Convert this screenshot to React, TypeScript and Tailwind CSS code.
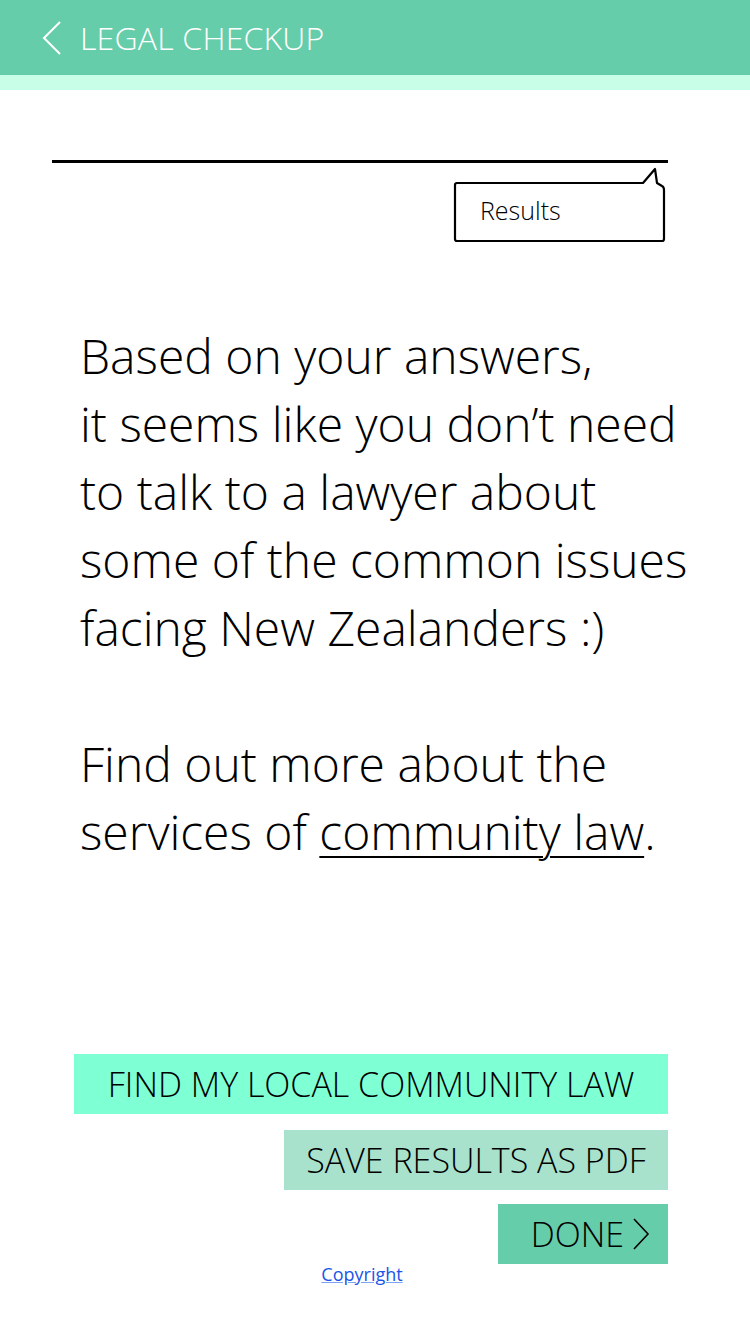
const font = { fontFamily: '"Open Sans", "Liberation Sans", sans-serif' };

function Callout() {
  return (
    <div className="relative w-[213px] h-[60px]">
      {/* outline with the little tail at top-right */}
      <svg
        className="absolute left-0 top-[-17px] overflow-visible"
        width="213"
        height="77"
        viewBox="0 0 213 77"
        fill="none"
      >
        <path
          d="M4 17 H190 L202 3 L204 17 L209 20 Q211 21 211 24 V73 Q211 75 209 75 H4 Q2 75 2 73 V19 Q2 17 4 17 Z"
          fill="white"
          stroke="black"
          strokeWidth="2.2"
          strokeLinejoin="round"
        />
      </svg>
      <span className="absolute left-[27px] top-[12px] text-[25px] leading-[30px] font-light text-black" style={font}>
        Results
      </span>
    </div>
  );
}

export default function App() {
  return (
    <div className="w-[750px] min-h-[1334px] bg-white" style={font}>
      {/* Header */}
      <div className="h-[75px] bg-[#66CDAA] flex items-center pl-[42px]">
        <svg width="20" height="34" viewBox="0 0 20 34" fill="none">
          <path d="M18 1 L2 17 L18 33" stroke="white" strokeWidth="2" />
        </svg>
        <h1 className="ml-[18px] text-white text-[32px] font-light tracking-[0.2px]">LEGAL CHECKUP</h1>
      </div>
      <div className="h-[15px] bg-[#C8FDE8]"></div>

      {/* Progress line + label */}
      <div className="pt-[70px] pl-[52px] pr-[82px]">
        <div className="h-[3px] bg-black"></div>
        <div className="flex justify-end mt-[20px] mr-[2px]">
          <Callout />
        </div>
      </div>

      {/* Result message */}
      <p className="mt-[79px] pl-[80px] text-[48px] leading-[68px] font-light text-black whitespace-nowrap">
        Based on your answers,
        <br />
        it seems like you don’t need
        <br />
        to talk to a lawyer about
        <br />
        some of the common issues
        <br />
        facing New Zealanders :)
        <br />
        <br />
        Find out more about the
        <br />
        services of <a href="#" className="underline underline-offset-[6px] decoration-[2px]">community law</a>.
      </p>

      {/* Actions */}
      <div className="mt-[188px] pr-[82px] flex flex-col items-end">
        <button className="w-[594px] h-[60px] bg-[#7FFFD4] text-[34px] font-light text-black">
          FIND MY LOCAL COMMUNITY LAW
        </button>
        <button className="mt-[16px] w-[384px] h-[60px] bg-[#A8E2CC] text-[34px] font-light text-black">
          SAVE RESULTS AS PDF
        </button>
        <button className="mt-[14px] w-[170px] h-[60px] bg-[#66CDAA] text-[34px] font-light text-black flex items-center justify-end pr-[18px]">
          DONE
          <svg className="ml-[8px]" width="18" height="34" viewBox="0 0 18 34" fill="none">
            <path d="M2 2 L16 17 L2 32" stroke="black" strokeWidth="1.6" />
          </svg>
        </button>
      </div>
      <div className="flex justify-center pr-[26px] mt-[-3px]">
        <a href="#" className="text-[18px] text-[#1A55E8] underline decoration-[#7FA3F0]">
          Copyright
        </a>
      </div>
    </div>
  );
}
